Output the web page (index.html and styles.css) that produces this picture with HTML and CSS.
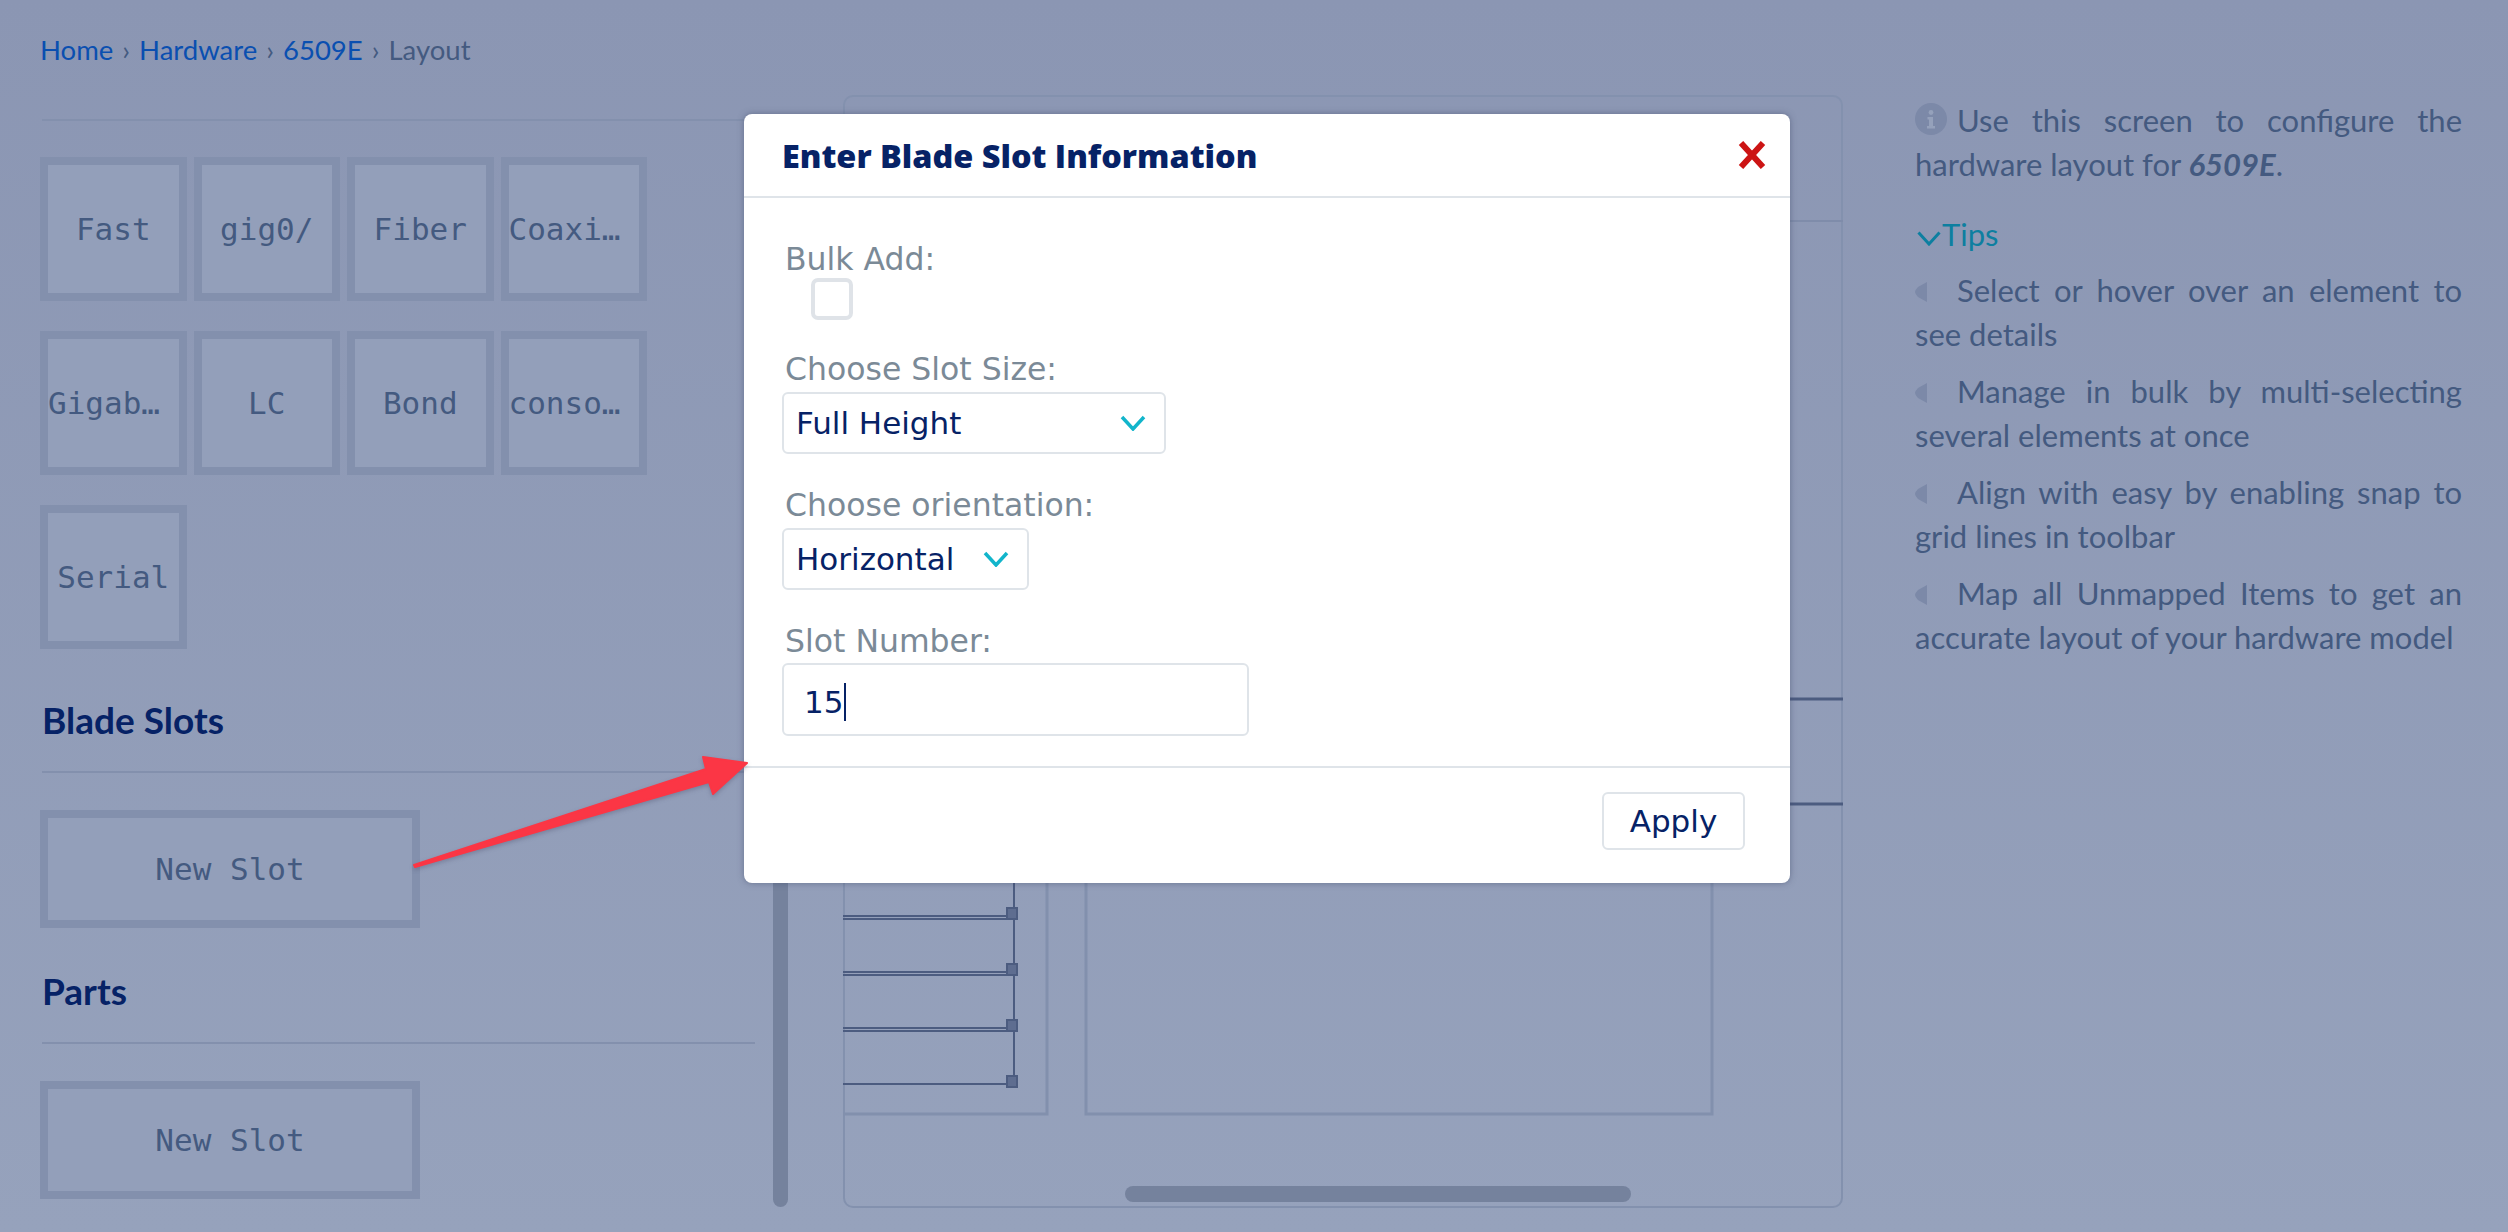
FILE: index.html

```html
<!DOCTYPE html>
<html lang="en">
<head>
  <meta charset="UTF-8" />
  <meta name="viewport" content="width=device-width, initial-scale=1.0" />
  <title>6509E - Layout</title>
  <link rel="stylesheet" href="styles.css">
</head>
<body>
  <nav class="crumbs">
    <a href="#">Home</a><span class="sep">›</span><a href="#">Hardware</a><span class="sep">›</span><a href="#">6509E</a><span class="sep">›</span><span>Layout</span>
  </nav>

  <main class="page">
    <section class="palette">
      <div class="tile-grid">
        <div class="tile">Fast</div>
        <div class="tile">gig0/</div>
        <div class="tile">Fiber</div>
        <div class="tile tile-long">Coaxial</div>
        <div class="tile tile-long">Gigabit</div>
        <div class="tile">LC</div>
        <div class="tile">Bond</div>
        <div class="tile tile-long">console</div>
        <div class="tile">Serial</div>
      </div>

      <h2 class="palette-title">Blade Slots</h2>
      <div class="tile tile-wide">New Slot</div>

      <h2 class="palette-title palette-title-parts">Parts</h2>
      <div class="tile tile-wide">New Slot</div>
    </section>

    <div class="scroll-v"></div>

    <section class="canvas">
      <!-- viewBox uses page coordinates so the diagram is easy to measure -->
      <svg class="diagram" viewBox="843 96 1000 1113">
        <g fill="none" stroke="#8290ad" stroke-width="3">
          <path d="M843 1115H1047V860"/>
          <path d="M1086 860V1115H1712V860"/>
        </g>
        <path d="M843 222H1843" stroke="#7f8caa" stroke-width="2"/>
        <g stroke="#4c5c80" stroke-width="3">
          <path d="M1790 700H1843M1790 805H1843"/>
          <path d="M1014 880V1084" stroke-width="2"/>
          <path d="M843 917H1010M843 920H1010M843 973H1010M843 976H1010M843 1029H1010M843 1032H1010M843 1085H1010" stroke-width="2"/>
        </g>
        <g fill="#5e6d90" stroke="#4c5c80" stroke-width="2">
          <rect x="1007" y="909" width="10" height="11"/>
          <rect x="1007" y="965" width="10" height="11"/>
          <rect x="1007" y="1021" width="10" height="11"/>
          <rect x="1007" y="1077" width="10" height="11"/>
        </g>
      </svg>
      <div class="scroll-h"></div>
    </section>

    <aside class="help">
      <p class="help-intro"><svg class="info-icon" viewBox="0 0 32 32"><circle cx="16" cy="16" r="16" fill="#7c89a8"/><circle cx="16" cy="9.5" r="2.4" fill="#95a1bb"/><path d="M12.5 14h5.5v9h2v2.5h-8V23h2v-6.500h-1.500z" fill="#95a1bb"/></svg>Use this screen to configure the hardware layout for <em>6509E</em>.</p>
      <div class="tips-toggle"><svg class="tips-chevron" viewBox="0 0 24 15"><path d="M1.500 1.500L12 13L22.500 1.500" fill="none" stroke="#0d7fa0" stroke-width="3"/></svg>Tips</div>
      <ul class="tips">
        <li><svg class="tip-bullet" viewBox="0 0 12 20"><path d="M12 0V20L3 15Q0 12 0 10T3 5z" fill="#7c89a8"/></svg>Select or hover over an element to see details</li>
        <li><svg class="tip-bullet" viewBox="0 0 12 20"><path d="M12 0V20L3 15Q0 12 0 10T3 5z" fill="#7c89a8"/></svg>Manage in bulk by multi-selecting several elements at once</li>
        <li><svg class="tip-bullet" viewBox="0 0 12 20"><path d="M12 0V20L3 15Q0 12 0 10T3 5z" fill="#7c89a8"/></svg>Align with easy by enabling snap to grid lines in toolbar</li>
        <li><svg class="tip-bullet" viewBox="0 0 12 20"><path d="M12 0V20L3 15Q0 12 0 10T3 5z" fill="#7c89a8"/></svg>Map all Unmapped Items to get an accurate layout of your hardware model</li>
      </ul>
    </aside>
  </main>

  <div class="modal">
    <header class="modal-head">
      <h1>Enter Blade Slot Information</h1>
      <svg class="modal-close" viewBox="0 0 28 28"><path d="M3 2L14 14L25 2M3 26L14 14L25 26" fill="none" stroke="#cc1414" stroke-width="6"/></svg>
    </header>
    <div class="modal-body">
      <div class="field field-check">
        <label>Bulk Add:</label>
        <div class="checkbox"></div>
      </div>
      <div class="field">
        <label>Choose Slot Size:</label>
        <div class="select select-size">
          <span>Full Height</span>
          <svg class="select-chevron" viewBox="0 0 26 16"><path d="M2 2L13 14L24 2" fill="none" stroke="#12b5cb" stroke-width="3.500"/></svg>
        </div>
      </div>
      <div class="field">
        <label>Choose orientation:</label>
        <div class="select select-orient">
          <span>Horizontal</span>
          <svg class="select-chevron" viewBox="0 0 26 16"><path d="M2 2L13 14L24 2" fill="none" stroke="#12b5cb" stroke-width="3.500"/></svg>
        </div>
      </div>
      <div class="field field-last">
        <label>Slot Number:</label>
        <div class="text-input"><span class="caret">15</span></div>
      </div>
    </div>
    <footer class="modal-foot">
      <button type="button">Apply</button>
    </footer>
  </div>

  <svg class="callout" viewBox="400 740 380 140">
    <path d="M414 865L706 769L703 757L747 763L713 794L709 782L415 867z" fill="#fb3645" stroke="#fb3645" stroke-width="2" stroke-linejoin="round"/>
  </svg>
</body>
</html>
```

FILE: styles.css

```css
html, body {
  height: 100%;
}
body {
  margin: 0;
  height: 1232px;
  overflow: hidden;
  position: relative;
  font-family: Lato, 'Noto Sans', sans-serif;
  background: linear-gradient(to bottom, #8b96b3, #96a2bc);
  color: #445a80;
}

.crumbs {
  padding: 32px 0 0 40px;
  height: 38px;
  line-height: 36px;
  font-size: 27.5px;
}
.crumbs a {
  color: #0a4fb0;
  text-decoration: none;
}
.crumbs .sep {
  margin: 0 9px;
}

.page {
  display: grid;
  grid-template-columns: 715px 15px 1000px 547px;
  margin-top: 49px;
  padding-left: 40px;
  column-gap: 0;
}

/* left column */
.palette {
  grid-column: 1;
}
.tile-grid {
  display: grid;
  grid-template-columns: repeat(4, 144.5px);
  column-gap: 9px;
  row-gap: 30px;
  border-top: 2px solid #8390ad;
  margin-left: 2px;
  padding-top: 36px;
}
.tile-grid .tile {
  margin-left: -2px;
}
.tile {
  box-sizing: border-box;
  height: 144px;
  line-height: 128px;
  border: 8px solid #8390ad;
  background: #939fba;
  font-family: 'DejaVu Sans Mono', monospace;
  font-size: 31px;
  text-align: center;
  white-space: nowrap;
  overflow: hidden;
  text-overflow: ellipsis;
}
.tile-long {
  text-align: left;
  padding-right: 14px;
}
.tile-wide {
  width: 380px;
  height: 118px;
  line-height: 102px;
}
.palette-title {
  margin: 47px 0 0 2px;
  padding-bottom: 27px;
  height: 48px;
  line-height: 48px;
  font-size: 37px;
  font-weight: 700;
  color: #062266;
  border-bottom: 2px solid #8390ad;
  margin-bottom: 37px;
}
.palette-title-parts {
  margin-top: 39px;
}

/* scrollbars */
.scroll-v {
  grid-column: 2;
  width: 15px;
  height: 800px;
  margin: 288px 0 0 18px;
  border-radius: 8px;
  background: #75829d;
}
.scroll-h {
  position: absolute;
  left: 280px;
  bottom: 4px;
  width: 506px;
  height: 16px;
  border-radius: 8px;
  background: #75829d;
}

/* diagram */
.canvas {
  box-sizing: border-box;
  position: relative;
  grid-column: 3;
  margin-left: 73px;
  margin-top: -24px;
  width: 1000px;
  height: 1113px;
  border: 2px solid #8391ae;
  border-radius: 10px;
}
.diagram {
  position: absolute;
  left: -2px;
  top: -2px;
  width: 1000px;
  height: 1113px;
}

/* right column */
.help {
  grid-column: 4;
  margin-left: 145px;
  margin-top: -24px;
  width: 547px;
  font-size: 31px;
  line-height: 44px;
  text-align: justify;
}
.help-intro {
  margin: 0;
  padding-top: 3px;
}
.help-intro em {
  font-weight: 700;
}
.info-icon {
  width: 32px;
  height: 32px;
  margin-right: 10px;
  vertical-align: -3px;
}
.tips-toggle {
  margin-top: 26px;
  color: #0d7fa0;
}
.tips-chevron {
  width: 24px;
  height: 15px;
  margin: 0 1px 0 2px;
}
.tips {
  list-style: none;
  margin: 12px 0 0;
  padding: 0;
}
.tips li {
  margin-bottom: 13px;
}
.tip-bullet {
  width: 12px;
  height: 20px;
  margin-right: 30px;
  vertical-align: 0;
}

/* dialog */
.modal {
  box-sizing: border-box;
  position: absolute;
  left: 744px;
  top: 114px;
  width: 1046px;
  height: 769px;
  background: #fff;
  border-radius: 8px;
  box-shadow: 0 0 6px rgba(60, 70, 100, 0.5);
  display: flex;
  flex-direction: column;
}
.modal-head {
  box-sizing: border-box;
  height: 84px;
  flex: none;
  padding: 0 24px 0 38px;
  display: flex;
  align-items: center;
  justify-content: space-between;
  border-bottom: 2px solid #dfe4e9;
}
.modal-head h1 {
  margin: 0;
  font-family: 'Open Sans', sans-serif;
  font-size: 32.4px;
  font-weight: 800;
  color: #062266;
}
.modal-close {
  width: 28px;
  height: 28px;
}
.modal-body {
  flex: 1;
  min-height: 0;
  padding: 43px 0 0 38px;
  font-family: 'DejaVu Sans', sans-serif;
  font-size: 31px;
}
.field {
  margin-bottom: 33px;
}
.field-check {
  margin-bottom: 31px;
}
.field-last {
  margin-bottom: 0;
}
.field label {
  display: block;
  height: 36px;
  line-height: 36px;
  padding-left: 3px;
  margin-bottom: 5px;
  font-size: 31.5px;
  color: #7b8a97;
}
.field-check label {
  margin-bottom: 1px;
}
.field-last label {
  margin-bottom: 4px;
}
.checkbox {
  box-sizing: border-box;
  width: 42px;
  height: 42px;
  margin-left: 29px;
  border: 4px solid #dfe3e8;
  border-radius: 7px;
}
.select {
  box-sizing: border-box;
  height: 62px;
  padding: 0 12px;
  display: flex;
  align-items: center;
  justify-content: space-between;
  border: 2px solid #dfe4e9;
  border-radius: 6px;
  color: #062266;
}
.select-size {
  width: 384px;
  padding-right: 18px;
}
.select-orient {
  width: 247px;
  padding-right: 18px;
}
.select-chevron {
  width: 26px;
  height: 16px;
}
.text-input {
  box-sizing: border-box;
  width: 467px;
  height: 73px;
  padding-left: 20px;
  line-height: 69px;
  border: 2px solid #dfe4e9;
  border-radius: 6px;
  color: #062266;
}
.caret {
  display: inline-block;
  line-height: 38px;
  padding-right: 1px;
  border-right: 2px solid #062266;
  vertical-align: middle;
}
.modal-foot {
  box-sizing: border-box;
  height: 117px;
  flex: none;
  padding: 24px 45px 0 0;
  border-top: 2px solid #dfe4e9;
  text-align: right;
}
.modal-foot button {
  box-sizing: border-box;
  width: 143px;
  height: 58px;
  padding: 0;
  background: #fff;
  border: 2px solid #dfe4e9;
  border-radius: 6px;
  font-family: 'DejaVu Sans', sans-serif;
  font-size: 31px;
  color: #062266;
}

/* red annotation arrow drawn on top of the screenshot */
.callout {
  position: absolute;
  left: 400px;
  top: 740px;
  width: 380px;
  height: 140px;
  filter: drop-shadow(0 2px 2px rgba(60, 60, 90, 0.3));
}
```
